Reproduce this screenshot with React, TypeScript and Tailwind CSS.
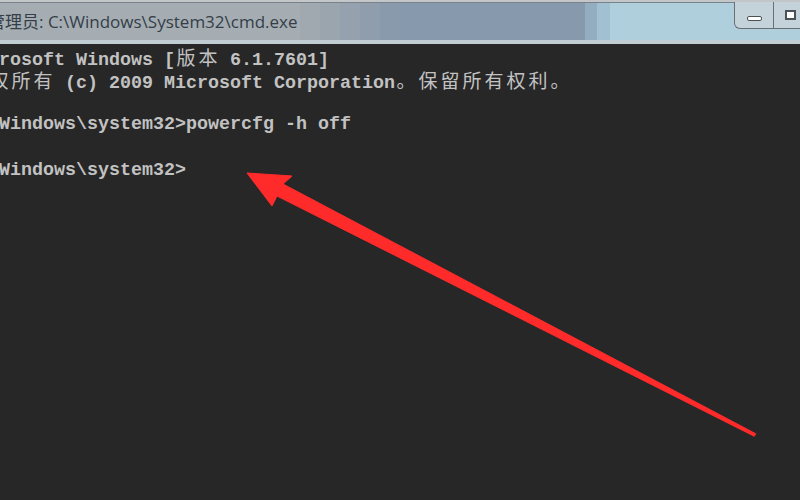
import React from 'react';

const lines = [
  'Microsoft Windows [版本 6.1.7601]',
  '版权所有 (c) 2009 Microsoft Corporation。保留所有权利。',
  '',
  'C:\\Windows\\system32>powercfg -h off',
  '',
  'C:\\Windows\\system32>',
];

// stepped fade between the grey and blue parts of the caption
const fadeSteps = ['bg-[#a0a9b0]', 'bg-[#9ba5ae]', 'bg-[#95a1ae]', 'bg-[#8f9dad]', 'bg-[#8a9aad]'];

// console cells: CJK glyphs take two columns (22px)
function ConsoleLine({ text }: { text: string }) {
  return (
    <div className="h-[22.8px] whitespace-pre">
      {Array.from(text).map((ch, i) =>
        ch.charCodeAt(0) > 0x2e80 ? (
          <span
            key={i}
            className="inline-block w-[22px] text-center font-normal font-['Noto_Sans_CJK_SC',sans-serif] text-[19px]"
          >
            {ch}
          </span>
        ) : (
          <span key={i}>{ch}</span>
        )
      )}
    </div>
  );
}

function TitleBar() {
  return (
    <div className="flex flex-col h-[44px] shrink-0 bg-[#98a6b3]">
      <div className="h-[3px] bg-[#c2c6c9] border-b border-[#7a8188]" />
      <div className="flex-1 flex items-stretch">
        <div className="w-[300px] shrink-0 overflow-visible flex items-start bg-[#a5adb3]">
          <div className="pt-[8px] -ml-[12px] text-[17px] leading-[22px] text-[#343e48] font-['Open_Sans','Noto_Sans_CJK_SC',sans-serif] whitespace-nowrap">
            管理员: C:\Windows\System32\cmd.exe
          </div>
        </div>
        {fadeSteps.map((c) => (
          <div key={c} className={`w-[20px] shrink-0 ${c}`} />
        ))}
        <div className="w-[185px] shrink-0 bg-[#8699ad]" />
        <div className="w-[12px] shrink-0 bg-[#93adc1]" />
        <div className="w-[13px] shrink-0 bg-[#a1c0d1]" />
        <div className="w-[190px] shrink-0 flex items-start justify-end bg-[#afcfdc]">
          <div className="flex -mr-[12px]">
            <div className="w-[40px] h-[27px] -mt-px flex items-center justify-center rounded-bl-[6px] border border-t-0 border-[#6a6f74] bg-[#c4d2da]">
              <div className="mt-[6px] w-[15px] h-[5px] rounded-[2px] border border-[#4a5258] bg-white" />
            </div>
            <div className="w-[38px] h-[27px] -mt-px flex items-center justify-center border-b border-[#6a6f74] bg-[#c4d2da]">
              <div className="-ml-[6px] w-[11px] h-[10px] border-2 border-[#4a5258] bg-white" />
            </div>
          </div>
        </div>
      </div>
      <div className="h-[4px] bg-[#c2ccd3]" />
    </div>
  );
}

export default function App() {
  return (
    <div className="relative w-[800px] h-[500px] overflow-hidden flex flex-col bg-[#272727]">
      <TitleBar />
      <div className="flex-1 pt-[2px] font-['Liberation_Mono',monospace] font-bold text-[18.33px] leading-[22.8px] text-[#c2c2c2]">
        <div className="-ml-[34px]">
          {lines.map((l, i) => (
            <ConsoleLine key={i} text={l} />
          ))}
        </div>
      </div>
      <svg className="absolute inset-0" width="800" height="500" viewBox="0 0 800 500">
        <polygon
          points="247,173 292,176 283,184 755.7,433.7 754.3,436.3 277,196 272,206"
          fill="#ff2b2b"
          stroke="#ff2b2b"
          strokeWidth="1"
          strokeLinejoin="round"
        />
      </svg>
    </div>
  );
}
